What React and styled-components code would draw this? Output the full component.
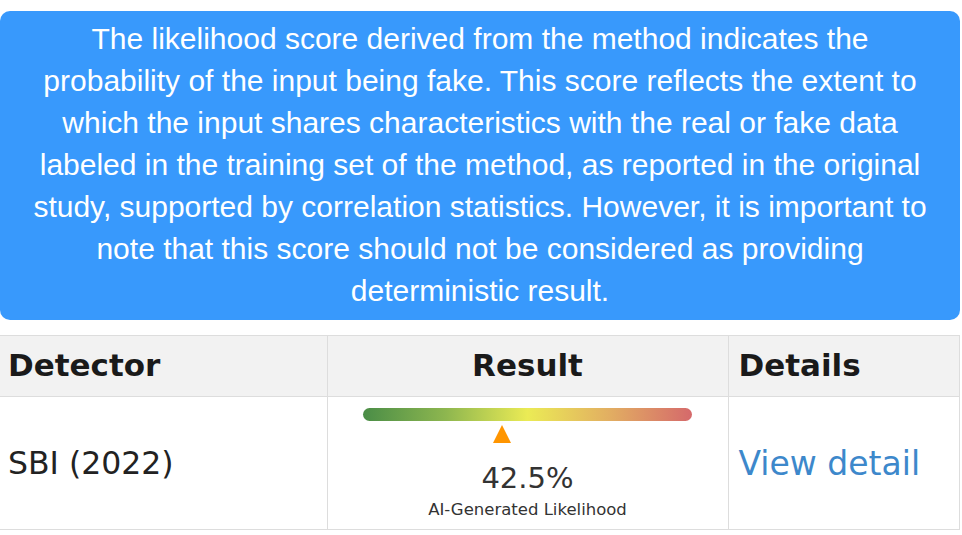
import React from 'react';
import styled, { createGlobalStyle } from 'styled-components';

const GlobalStyle = createGlobalStyle`
  html, body {
    margin: 0;
    padding: 0;
    background: #fff;
  }
  #root {
    width: 960px;
  }
`;

const Page = styled.div`
  padding-top: 11px;
  width: 960px;
`;

const Notice = styled.div`
  background: #3899fc;
  border-radius: 10px;
  padding: 7px 26px 8px;
  color: #fff;
  font-family: "Liberation Sans", Arial, sans-serif;
  font-size: 30px;
  line-height: 42px;
  text-align: center;
`;

const Table = styled.table`
  margin-top: 15px;
  width: 960px;
  border-collapse: collapse;
  table-layout: fixed;
  font-family: "DejaVu Sans", sans-serif;
`;

const HeadCell = styled.th`
  background: #f2f2f2;
  color: #1a1a1a;
  font-size: 31px;
  font-weight: bold;
  text-align: ${p => (p.$center ? 'center' : 'left')};
  padding: 12px 10px 13px ${p => p.$pad || 10}px;
  border-top: 1px solid #ddd;
  border-bottom: 1px solid #ddd;
  border-right: 1px solid #ddd;
  line-height: 35px;
`;

const Cell = styled.td`
  padding: 0 10px 0 ${p => p.$pad || 10}px;
  border-bottom: 1px solid #ddd;
  border-right: 1px solid #ddd;
  vertical-align: middle;
  color: #222;
  font-size: 31.5px;
`;

const ResultCell = styled.td`
  padding: 11px 0 9px;
  border-bottom: 1px solid #ddd;
  border-right: 1px solid #ddd;
`;

const Gauge = styled.div`
  display: flex;
  flex-direction: column;
  align-items: center;
`;

const Track = styled.div`
  position: relative;
  width: 329px;
  height: 13px;
  border-radius: 7px;
  background: linear-gradient(
    to right,
    #4a8d47 0%,
    #8db64f 25%,
    #ebeb55 50%,
    #e2ae62 75%,
    #d5696b 100%
  );
  margin-bottom: 22px;
`;

const Marker = styled.div`
  position: absolute;
  top: 17px;
  width: 0;
  height: 0;
  margin-left: -9.5px;
  border-left: 9.5px solid transparent;
  border-right: 9.5px solid transparent;
  border-bottom: 18px solid #ff9500;
`;

const Score = styled.div`
  margin-top: 18px;
  font-size: 29px;
  line-height: 34px;
  color: #333;
`;

const Caption = styled.div`
  margin-top: 5px;
  font-size: 16.5px;
  line-height: 20px;
  color: #333;
`;

const DetailLink = styled.a`
  color: #3d88cb;
  font-size: 33px;
  text-decoration: none;
`;

const rows = [{ name: 'SBI (2022)', score: 42.5 }];

export default function App() {
  return (
    <Page>
      <GlobalStyle />
      <Notice>
        The likelihood score derived from the method indicates the probability of the input being fake. This score
        reflects the extent to which the input shares characteristics with the real or fake data labeled in the
        training set of the method, as reported in the original study, supported by correlation statistics. However,
        it is important to note that this score should not be considered as providing deterministic result.
      </Notice>
      <Table>
        <colgroup>
          <col style={{ width: 327 }} />
          <col style={{ width: 401 }} />
          <col />
        </colgroup>
        <thead>
          <tr>
            <HeadCell $pad={8}>Detector</HeadCell>
            <HeadCell $center>Result</HeadCell>
            <HeadCell>Details</HeadCell>
          </tr>
        </thead>
        <tbody>
          {rows.map((row, i) => (
            <tr key={i}>
              <Cell $pad={8}>{row.name}</Cell>
              <ResultCell>
                <Gauge>
                  <Track>
                    <Marker style={{ left: row.score + '%' }} />
                  </Track>
                  <Score>{row.score}%</Score>
                  <Caption>AI-Generated Likelihood</Caption>
                </Gauge>
              </ResultCell>
              <Cell>
                <DetailLink href="#">View detail</DetailLink>
              </Cell>
            </tr>
          ))}
        </tbody>
      </Table>
    </Page>
  );
}
